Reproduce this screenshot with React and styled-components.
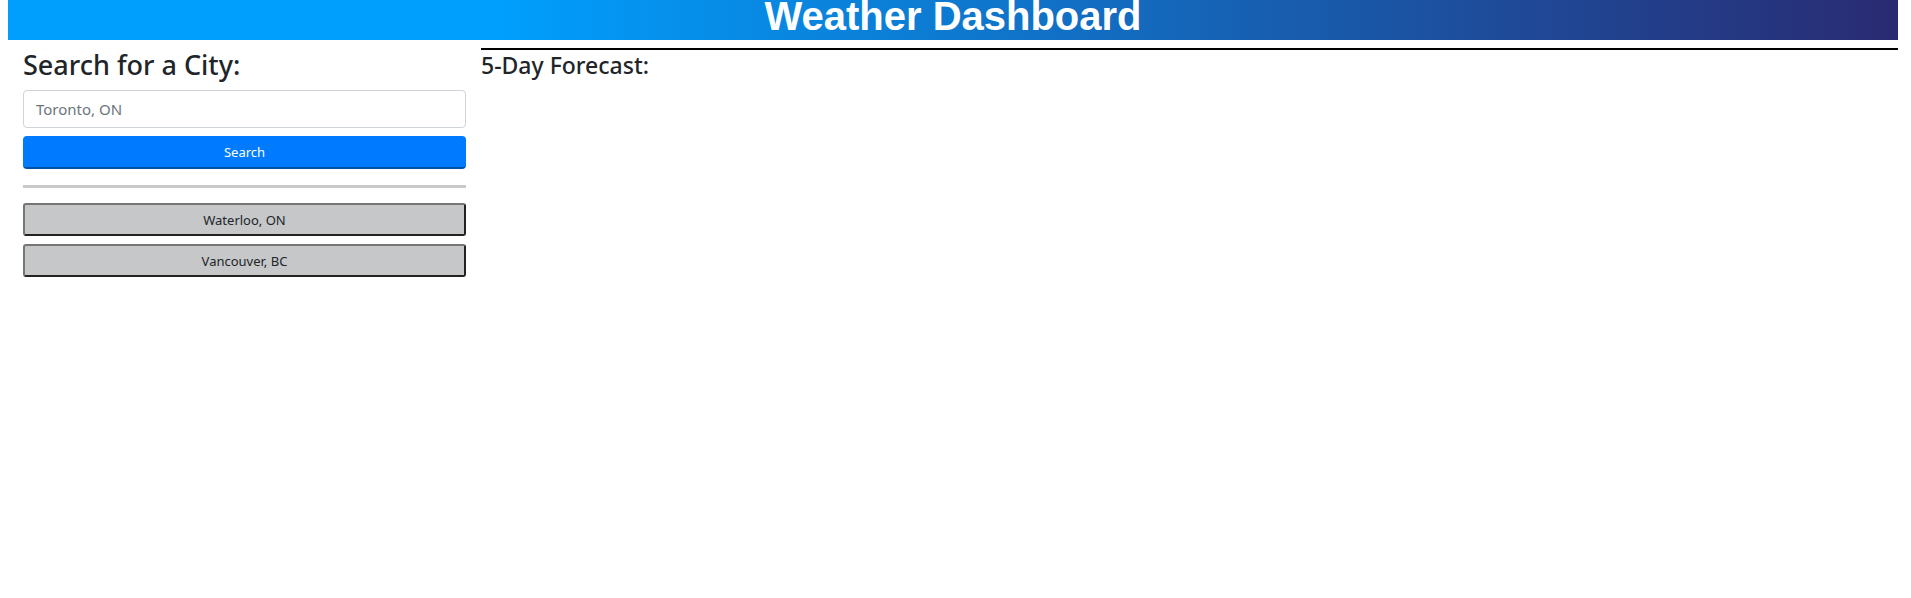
import React from "react";
import styled, { createGlobalStyle } from "styled-components";

const Global = createGlobalStyle`
  html, body { margin: 0; padding: 0; background: #fff; }
  body { font-family: "Noto Sans", "Open Sans", sans-serif; color: #212529; }
  * { box-sizing: border-box; }
`;

const Page = styled.div`
  padding: 0 13px 0 8px;
`;

const Header = styled.header`
  height: 40px;
  background: linear-gradient(to left, #2a2a72 0%, #009ffd 74%);
  text-align: center;
  overflow: visible;
`;

const Title = styled.h1`
  margin: 0;
  font-family: "Liberation Sans", Arial, sans-serif;
  font-weight: 700;
  font-size: 40px;
  line-height: 32px;
  color: #fff;
`;

const Main = styled.main`
  display: flex;
  align-items: flex-start;
`;

const Sidebar = styled.aside`
  width: 474px;
  flex: none;
  padding: 0 16px 0 15px;
  display: flex;
  flex-direction: column;
`;

const SideHeading = styled.h3`
  margin: 4px 0 4px;
  font-size: 27px;
  font-weight: 500;
  line-height: 42px;
  color: #212529;
`;

const Input = styled.input`
  height: 38px;
  width: 100%;
  padding: 6px 12px;
  font-family: inherit;
  font-size: 15px;
  color: #495057;
  border: 1px solid #ced4da;
  border-radius: 4px;
  outline: none;
  &::placeholder { color: #6c757d; }
`;

const SearchButton = styled.button`
  margin-top: 8px;
  height: 33px;
  width: 100%;
  background: #007bff;
  color: #fff;
  border: none;
  border-bottom: 2px solid #0052a8;
  border-radius: 4px;
  font-family: inherit;
  font-size: 13px;
  line-height: 1;
  padding-top: 2px;
`;

const Divider = styled.hr`
  margin: 16px 0 15px;
  border: none;
  height: 3px;
  background: #c9c9c9;
`;

const CityList = styled.div`
  display: flex;
  flex-direction: column;
  gap: 8px;
`;

const CityButton = styled.button`
  height: 33px;
  width: 100%;
  background: #c6c7c9;
  color: #212529;
  border: 2px solid;
  border-color: #767676 #222 #222 #767676;
  border-radius: 3px;
  font-family: inherit;
  font-size: 13px;
`;

const Forecast = styled.section`
  flex: 1;
  margin-top: 8px;
  margin-left: -1px;
  border-top: 2px solid #000;
`;

const ForecastHeading = styled.h4`
  margin: 0;
  font-size: 23px;
  font-weight: 500;
  line-height: 30px;
  color: #212529;
`;

export default function App() {
  const cities = ["Waterloo, ON", "Vancouver, BC"];
  return (
    <Page>
      <Global />
      <Header>
        <Title>Weather Dashboard</Title>
      </Header>
      <Main>
        <Sidebar>
          <SideHeading>Search for a City:</SideHeading>
          <Input placeholder="Toronto, ON" />
          <SearchButton>Search</SearchButton>
          <Divider />
          <CityList>
            {cities.map((c) => (
              <CityButton key={c}>{c}</CityButton>
            ))}
          </CityList>
        </Sidebar>
        <Forecast>
          <ForecastHeading>5-Day Forecast:</ForecastHeading>
        </Forecast>
      </Main>
    </Page>
  );
}
